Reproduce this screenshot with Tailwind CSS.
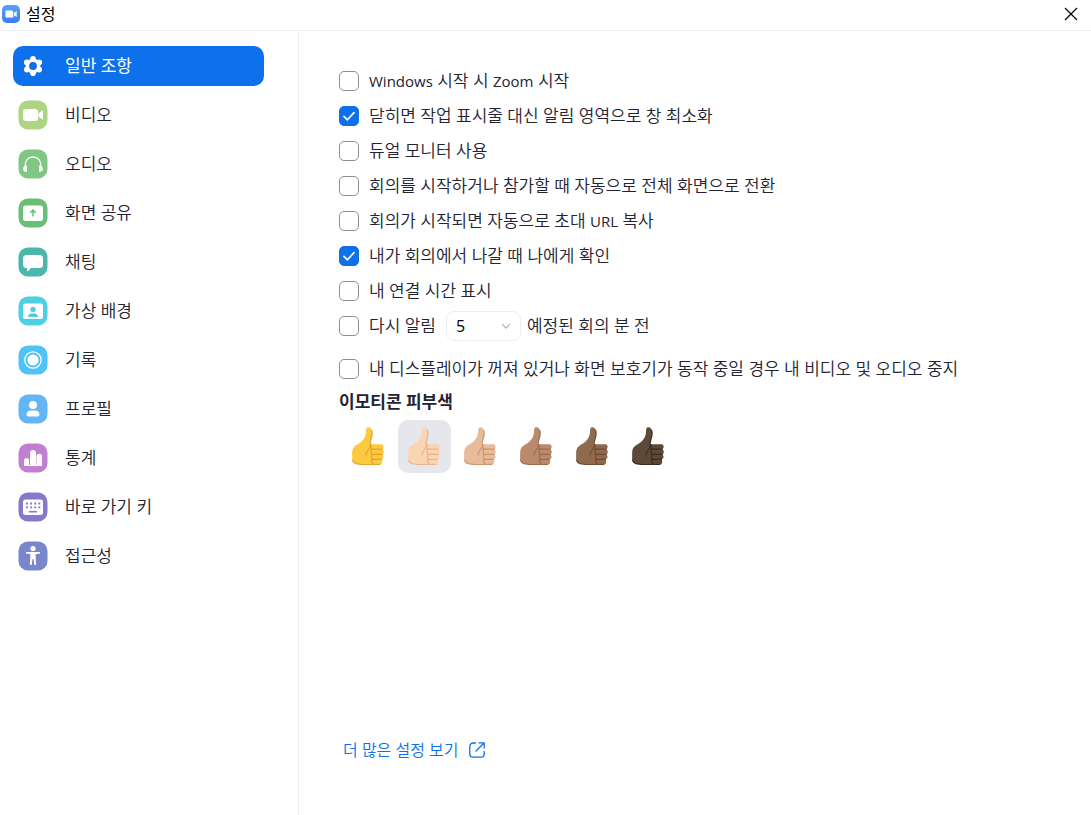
<!DOCTYPE html>
<html lang="ko">
<head>
  <meta charset="UTF-8" />
  <meta name="viewport" content="width=device-width, initial-scale=1.0" />
  <title>설정</title>
  <script src="https://cdn.jsdelivr.net/npm/@tailwindcss/browser@4"></script>
</head>
<body class="flex min-h-screen flex-col bg-white font-['Open_Sans','Noto_Sans_CJK_KR',sans-serif] text-[17px] leading-6 font-[350] text-[#232333]">

  <!-- shared shapes -->
  <svg class="hidden">
    <symbol id="check" viewBox="0 0 20 20">
      <path d="M5 10.4l3.4 3.4L15 6.6" fill="none" stroke="#fff" stroke-width="1.7" stroke-linecap="round" stroke-linejoin="round" />
    </symbol>
    <!-- fill and stroke come from the svg that uses it -->
    <symbol id="thumb" viewBox="0 0 96 115">
      <path stroke="none" d="M43 5C45-1 54-1 58 6c4 8 3 18 0 28l-4 16 4 2h31c7 0 9 12 2 15 6 2 7 14 0 16 6 3 5 14-2 15 4 4 2 16-5 16-20 2-46 2-66-1C7 112 0 108 0 98V78c0-12 5-19 14-24 12-6 19-13 24-23 5-9 3-18 5-26z" />
      <g fill="none" stroke-width="3.5" stroke-linecap="round" stroke-linejoin="round">
        <path d="M59 10c3 9 1 19-2 27l-3 13c3 5 2 10-1 14-7 7-11 12-10 20" />
        <path d="M60 67h31M61 83h30M61 98h28" />
        <path d="M58 54c-3 5-2 11 2 13-4 4-3 12 1 16-4 4-3 11 0 15-3 4-2 10 2 14" />
        <path d="M2 100c2 8 6 11 17 12 20 3 44 3 64 1" />
      </g>
    </symbol>
  </svg>

  <header class="flex h-[31px] shrink-0 items-center border-b border-[#ededf4] pr-3 pb-[2px] pl-[2px] text-black">
    <svg class="size-[18px]" viewBox="0 0 18 18">
      <defs>
        <linearGradient id="logo" x1="0" y1="0" x2="0" y2="1">
          <stop offset="0" stop-color="#5aa2f8" />
          <stop offset="1" stop-color="#3a7cfa" />
        </linearGradient>
      </defs>
      <rect width="18" height="18" rx="5" fill="url(#logo)" />
      <path fill="#fff" d="M3.500 5.500h6.200c1 0 1.600.6 1.600 1.600V12.500H5c-1 0-1.600-.6-1.600-1.600zM12 8l2.700-2v6L12 10.200z" />
    </svg>
    <h1 class="ml-[6px] text-base font-normal">설정</h1>
    <button type="button" aria-label="닫기" class="ml-auto">
      <svg class="size-4" viewBox="0 0 16 16" fill="none" stroke="#000" stroke-width="1.2">
        <path d="M2 2l12 12M14 2L2 14" />
      </svg>
    </button>
  </header>

  <div class="flex flex-1">
    <nav class="flex w-[299px] shrink-0 flex-col gap-[9px] border-r border-[#ededf4] pt-[15px] pr-[34px] pl-[13px]">
      <button type="button" class="flex h-10 items-center gap-[17px] rounded-[10px] bg-[#0e71eb] pl-[5px] font-normal text-white">
        <svg class="size-[30px]" viewBox="0 0 30 30">
          <g fill="#fff">
            <circle cx="15" cy="15" r="7.400" />
            <circle cx="15" cy="7.800" r="2.800" />
            <circle cx="21.240" cy="11.400" r="2.800" />
            <circle cx="21.240" cy="18.600" r="2.800" />
            <circle cx="15" cy="22.200" r="2.800" />
            <circle cx="8.760" cy="18.600" r="2.800" />
            <circle cx="8.760" cy="11.400" r="2.800" />
          </g>
          <circle cx="15" cy="15" r="3.900" fill="#0e71eb" />
        </svg>
        일반 조항
      </button>
      <button type="button" class="flex h-10 items-center gap-[17px] pl-[5px]">
        <svg class="size-[30px]" viewBox="0 0 30 30">
          <rect x=".5" y=".5" width="29" height="29" rx="9.500" fill="#aed581" />
          <path fill="#fff" d="M7 9h10a3 3 0 013 3v6a3 3 0 01-3 3H8a3 3 0 01-3-3v-7a2 2 0 012-2zM20.500 13.300l3.700-2.600q.8-.6.8.4v7.800q0 1-.8.4l-3.700-2.600z" />
        </svg>
        비디오
      </button>
      <button type="button" class="flex h-10 items-center gap-[17px] pl-[5px]">
        <svg class="size-[30px]" viewBox="0 0 30 30">
          <rect x=".5" y=".5" width="29" height="29" rx="9.500" fill="#81c784" />
          <path d="M7 17.500c0-6 3.200-9.500 8-9.500s8 3.500 8 9.500" fill="none" stroke="#fff" stroke-width="1.300" />
          <path fill="#fff" d="M9 16.500V23c-2.700 0-4-1.200-4-3.200s1.500-3.100 4-3.300zM21 16.500V23c2.700 0 4-1.200 4-3.200s-1.500-3.100-4-3.300z" />
        </svg>
        오디오
      </button>
      <button type="button" class="flex h-10 items-center gap-[17px] pl-[5px]">
        <svg class="size-[30px]" viewBox="0 0 30 30">
          <rect x=".5" y=".5" width="29" height="29" rx="9.500" fill="#6abf76" />
          <rect x="5" y="7.500" width="20" height="15.500" rx="2.500" fill="#fff" />
          <path d="M15 18.500v-6M12.200 14.800l2.800-2.800 2.800 2.800" fill="none" stroke="#6abf76" stroke-width="1.500" />
        </svg>
        화면 공유
      </button>
      <button type="button" class="flex h-10 items-center gap-[17px] pl-[5px]">
        <svg class="size-[30px]" viewBox="0 0 30 30">
          <rect x=".5" y=".5" width="29" height="29" rx="9.500" fill="#4db6ac" />
          <path fill="#fff" d="M8.500 8h13A3.500 3.500 0 0125 11.500v6a3.500 3.500 0 01-3.500 3.500H13l-2.800 3q-1.200.8-1.200-.5V21h-.5A3.500 3.500 0 015 17.500v-6A3.500 3.500 0 018.500 8z" />
        </svg>
        채팅
      </button>
      <button type="button" class="flex h-10 items-center gap-[17px] pl-[5px]">
        <svg class="size-[30px]" viewBox="0 0 30 30">
          <rect x=".5" y=".5" width="29" height="29" rx="9.500" fill="#4dd0e1" />
          <rect x="5" y="7.500" width="20" height="15.500" rx="2.500" fill="#fff" />
          <circle cx="15" cy="13.500" r="2.700" fill="#4dd0e1" />
          <path fill="#4dd0e1" d="M10 21c0-2.600 1.700-3.600 3.200-3.600h3.600c1.500 0 3.200 1 3.200 3.600z" />
        </svg>
        가상 배경
      </button>
      <button type="button" class="flex h-10 items-center gap-[17px] pl-[5px]">
        <svg class="size-[30px]" viewBox="0 0 30 30">
          <rect x=".5" y=".5" width="29" height="29" rx="9.500" fill="#4fc3f7" />
          <circle cx="15" cy="15" r="8.200" fill="none" stroke="#fff" stroke-width="1.300" />
          <circle cx="15" cy="15" r="5.500" fill="#fff" />
        </svg>
        기록
      </button>
      <button type="button" class="flex h-10 items-center gap-[17px] pl-[5px]">
        <svg class="size-[30px]" viewBox="0 0 30 30">
          <rect x=".5" y=".5" width="29" height="29" rx="9.500" fill="#64b5f6" />
          <circle cx="15" cy="11" r="4" fill="#fff" />
          <path fill="#fff" d="M8.500 20.500c0-2.600 2-4 4.200-4h4.600c2.200 0 4.200 1.400 4.200 4q0 2-2 2h-9q-2 0-2-2z" />
        </svg>
        프로필
      </button>
      <button type="button" class="flex h-10 items-center gap-[17px] pl-[5px]">
        <svg class="size-[30px]" viewBox="0 0 30 30">
          <rect x=".5" y=".5" width="29" height="29" rx="9.500" fill="#c17fd1" />
          <path fill="#fff" d="M6 23v-5.500a2.500 2.500 0 015 0V22h1V10a3 3 0 016 0v12h.500v-8.500a2.700 2.700 0 015.500 0V23z" />
        </svg>
        통계
      </button>
      <button type="button" class="flex h-10 items-center gap-[17px] pl-[5px]">
        <svg class="size-[30px]" viewBox="0 0 30 30">
          <rect x=".5" y=".5" width="29" height="29" rx="9.500" fill="#8579ca" />
          <rect x="5" y="7.500" width="20" height="15.500" rx="2.500" fill="#fff" />
          <path d="M8 11.500h14.500M8 15.300h14.500" stroke="#8579ca" stroke-width="1.800" stroke-dasharray="2 2.100" />
          <path d="M11 19.700h8" stroke="#8579ca" stroke-width="1.600" />
        </svg>
        바로 가기 키
      </button>
      <button type="button" class="flex h-10 items-center gap-[17px] pl-[5px]">
        <svg class="size-[30px]" viewBox="0 0 30 30">
          <rect x=".5" y=".5" width="29" height="29" rx="9.500" fill="#7986cb" />
          <circle cx="15" cy="7.500" r="2.600" fill="#fff" />
          <path fill="#fff" d="M8 11h14v1.600l-4.500.7.700 10.700h-1.900L15.500 18h-1l-.8 6h-1.900l.7-10.700-4.500-.7z" />
        </svg>
        접근성
      </button>
    </nav>

    <main class="flex flex-1 flex-col items-start pt-8 pb-[53px] pl-10">
      <div class="flex h-[35px] items-center gap-[10px]">
        <span class="grid">
          <input id="autostart" type="checkbox" class="peer col-start-1 row-start-1 size-5 appearance-none rounded-[5px] border border-[#8e8e98] checked:border-[#0e71eb] checked:bg-[#0e71eb]" />
          <svg class="pointer-events-none col-start-1 row-start-1 hidden size-5 peer-checked:block"><use href="#check" /></svg>
        </span>
        <label for="autostart"><span class="text-[15px] font-normal">Windows</span> 시작 시 <span class="text-[15px] font-normal">Zoom</span> 시작</label>
      </div>
      <div class="flex h-[35px] items-center gap-[10px]">
        <span class="grid">
          <input id="minimize" type="checkbox" checked class="peer col-start-1 row-start-1 size-5 appearance-none rounded-[5px] border border-[#8e8e98] checked:border-[#0e71eb] checked:bg-[#0e71eb]" />
          <svg class="pointer-events-none col-start-1 row-start-1 hidden size-5 peer-checked:block"><use href="#check" /></svg>
        </span>
        <label for="minimize">닫히면 작업 표시줄 대신 알림 영역으로 창 최소화</label>
      </div>
      <div class="flex h-[35px] items-center gap-[10px]">
        <span class="grid">
          <input id="dual" type="checkbox" class="peer col-start-1 row-start-1 size-5 appearance-none rounded-[5px] border border-[#8e8e98] checked:border-[#0e71eb] checked:bg-[#0e71eb]" />
          <svg class="pointer-events-none col-start-1 row-start-1 hidden size-5 peer-checked:block"><use href="#check" /></svg>
        </span>
        <label for="dual">듀얼 모니터 사용</label>
      </div>
      <div class="flex h-[35px] items-center gap-[10px]">
        <span class="grid">
          <input id="fullscreen" type="checkbox" class="peer col-start-1 row-start-1 size-5 appearance-none rounded-[5px] border border-[#8e8e98] checked:border-[#0e71eb] checked:bg-[#0e71eb]" />
          <svg class="pointer-events-none col-start-1 row-start-1 hidden size-5 peer-checked:block"><use href="#check" /></svg>
        </span>
        <label for="fullscreen">회의를 시작하거나 참가할 때 자동으로 전체 화면으로 전환</label>
      </div>
      <div class="flex h-[35px] items-center gap-[10px]">
        <span class="grid">
          <input id="copyurl" type="checkbox" class="peer col-start-1 row-start-1 size-5 appearance-none rounded-[5px] border border-[#8e8e98] checked:border-[#0e71eb] checked:bg-[#0e71eb]" />
          <svg class="pointer-events-none col-start-1 row-start-1 hidden size-5 peer-checked:block"><use href="#check" /></svg>
        </span>
        <label for="copyurl">회의가 시작되면 자동으로 초대 <span class="text-[15px] font-normal">URL</span> 복사</label>
      </div>
      <div class="flex h-[35px] items-center gap-[10px]">
        <span class="grid">
          <input id="confirm" type="checkbox" checked class="peer col-start-1 row-start-1 size-5 appearance-none rounded-[5px] border border-[#8e8e98] checked:border-[#0e71eb] checked:bg-[#0e71eb]" />
          <svg class="pointer-events-none col-start-1 row-start-1 hidden size-5 peer-checked:block"><use href="#check" /></svg>
        </span>
        <label for="confirm">내가 회의에서 나갈 때 나에게 확인</label>
      </div>
      <div class="flex h-[35px] items-center gap-[10px]">
        <span class="grid">
          <input id="elapsed" type="checkbox" class="peer col-start-1 row-start-1 size-5 appearance-none rounded-[5px] border border-[#8e8e98] checked:border-[#0e71eb] checked:bg-[#0e71eb]" />
          <svg class="pointer-events-none col-start-1 row-start-1 hidden size-5 peer-checked:block"><use href="#check" /></svg>
        </span>
        <label for="elapsed">내 연결 시간 표시</label>
      </div>
      <div class="flex h-[35px] items-center gap-[10px]">
        <span class="grid">
          <input id="remind" type="checkbox" class="peer col-start-1 row-start-1 size-5 appearance-none rounded-[5px] border border-[#8e8e98] checked:border-[#0e71eb] checked:bg-[#0e71eb]" />
          <svg class="pointer-events-none col-start-1 row-start-1 hidden size-5 peer-checked:block"><use href="#check" /></svg>
        </span>
        <label for="remind">다시 알림</label>
        <div class="flex items-center gap-[6px]">
          <div class="grid items-center">
            <select id="minutes" class="col-start-1 row-start-1 h-[30px] w-[75px] appearance-none rounded-lg border border-[#ededf4] bg-white pl-[9px] text-base font-normal text-black">
              <option>5</option>
              <option>10</option>
              <option>15</option>
            </select>
            <svg class="pointer-events-none col-start-1 row-start-1 mr-[9px] size-3 justify-self-end" viewBox="0 0 12 12" fill="none" stroke="#babac4" stroke-width="1.300">
              <path d="M2 4l4 4 4-4" />
            </svg>
          </div>
          <label for="minutes">예정된 회의 분 전</label>
        </div>
      </div>
      <div class="mt-2 flex h-[35px] items-center gap-[10px]">
        <span class="grid">
          <input id="displayoff" type="checkbox" class="peer col-start-1 row-start-1 size-5 appearance-none rounded-[5px] border border-[#8e8e98] checked:border-[#0e71eb] checked:bg-[#0e71eb]" />
          <svg class="pointer-events-none col-start-1 row-start-1 hidden size-5 peer-checked:block"><use href="#check" /></svg>
        </span>
        <label for="displayoff">내 디스플레이가 꺼져 있거나 화면 보호기가 동작 중일 경우 내 비디오 및 오디오 중지</label>
      </div>

      <h2 class="mt-1 font-bold">이모티콘 피부색</h2>
      <div class="mt-[6px] ml-[3px] flex gap-[3px]">
        <button type="button" aria-label="기본" class="grid size-[53px] place-items-center rounded-[10px] pr-px pb-px">
          <svg class="h-[38px] w-8 fill-[#fbca41] stroke-[#e2a12d]"><use href="#thumb" /></svg>
        </button>
        <button type="button" aria-label="밝은 피부색" class="grid size-[53px] place-items-center rounded-[10px] bg-[#e6e6ed] pr-px pb-px">
          <svg class="h-[38px] w-8 fill-[#f9d5b4] stroke-[#e8b48c]"><use href="#thumb" /></svg>
        </button>
        <button type="button" aria-label="약간 밝은 피부색" class="grid size-[53px] place-items-center rounded-[10px] pr-px pb-px">
          <svg class="h-[38px] w-8 fill-[#e8bb9b] stroke-[#c9946f]"><use href="#thumb" /></svg>
        </button>
        <button type="button" aria-label="중간 피부색" class="grid size-[53px] place-items-center rounded-[10px] pr-px pb-px">
          <svg class="h-[38px] w-8 fill-[#ba8a6e] stroke-[#a06a4c]"><use href="#thumb" /></svg>
        </button>
        <button type="button" aria-label="약간 어두운 피부색" class="grid size-[53px] place-items-center rounded-[10px] pr-px pb-px">
          <svg class="h-[38px] w-8 fill-[#906a4f] stroke-[#70492f]"><use href="#thumb" /></svg>
        </button>
        <button type="button" aria-label="어두운 피부색" class="grid size-[53px] place-items-center rounded-[10px] pr-px pb-px">
          <svg class="h-[38px] w-8 fill-[#5d4937] stroke-[#3d2a20]"><use href="#thumb" /></svg>
        </button>
      </div>

      <a href="#" class="mt-auto ml-1 flex items-center gap-[10px] text-base text-[#0e71eb]">
        더 많은 설정 보기
        <svg class="size-4" viewBox="0 0 16 16" fill="none" stroke="#0e71eb" stroke-width="1.300" stroke-linecap="round" stroke-linejoin="round">
          <path d="M6.500 1H4a3.200 3.200 0 00-3.200 3.200v7.800A3.200 3.200 0 004 15.200h8a3.200 3.200 0 003.200-3.200V9.500M10 .8h5.200V6M15 1L7 9" />
        </svg>
      </a>
    </main>
  </div>
</body>
</html>
